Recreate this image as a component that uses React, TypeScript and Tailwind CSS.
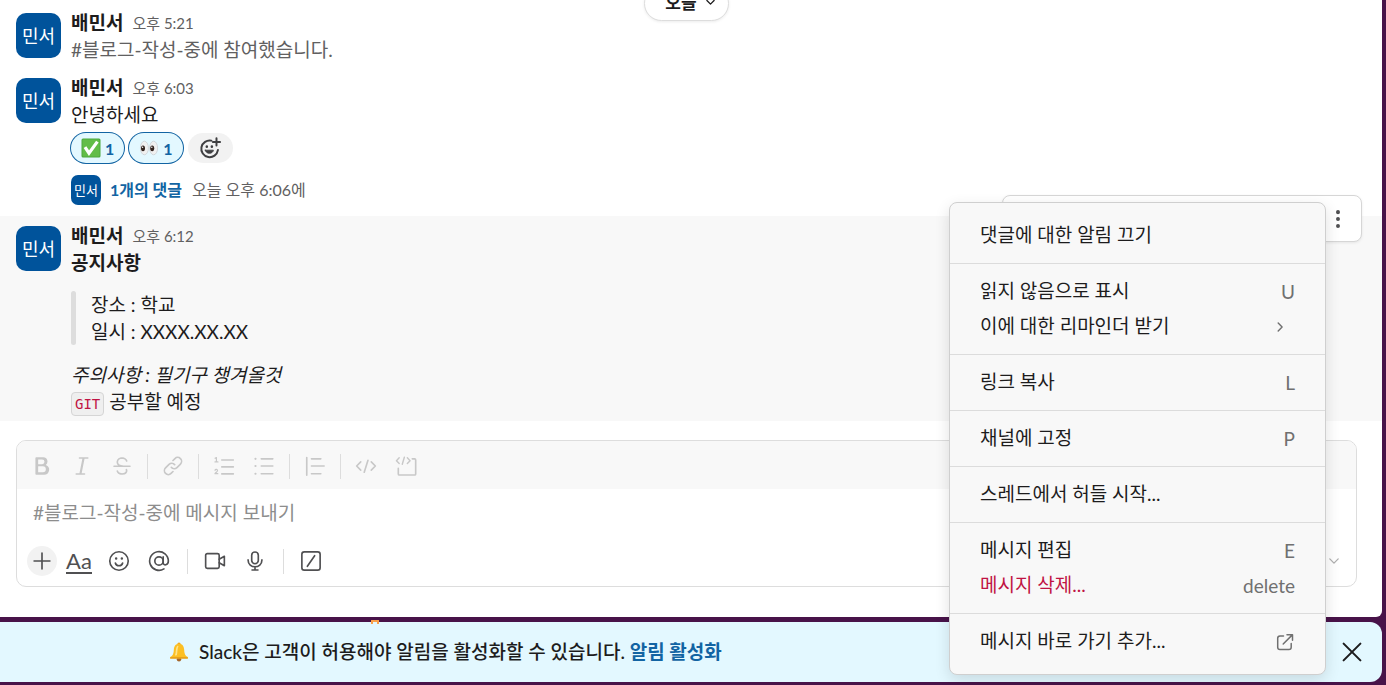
import type { ReactNode } from "react";

function Icon({ children, className = "size-[22px]" }: { children: ReactNode; className?: string }) {
  return (
    <svg
      viewBox="0 0 20 20"
      className={`shrink-0 ${className}`}
      fill="none"
      stroke="currentColor"
      strokeWidth="1.5"
      strokeLinecap="round"
      strokeLinejoin="round"
      aria-hidden="true"
    >
      {children}
    </svg>
  );
}

function Solid({ d }: { d: string }) {
  return <path d={d} fill="currentColor" stroke="none" fillRule="evenodd" />;
}

const boldPath =
  "M4 2.75A.75.75 0 0 1 4.75 2h6.343a3.91 3.91 0 0 1 3.88 3.449A2 2 0 0 1 15 5.84l.001.067a3.9 3.9 0 0 1-1.551 3.118A4.627 4.627 0 0 1 11.875 18H4.75a.75.75 0 0 1-.75-.75V9.5a.8.8 0 0 1 .032-.218A.8.8 0 0 1 4 9.065zm2.5 5.565h3.593a2.157 2.157 0 1 0 0-4.315H6.5zm4.25 1.935H6.5v5.5h4.25a2.75 2.75 0 1 0 0-5.5";
const italicPath =
  "M7 2.75A.75.75 0 0 1 7.75 2h7.5a.75.75 0 0 1 0 1.5H12.3l-2.6 13h2.55a.75.75 0 0 1 0 1.5h-7.5a.75.75 0 0 1 0-1.5H7.7l2.6-13H7.75A.75.75 0 0 1 7 2.75";
const strikePath =
  "M11.721 3.84c-.91-.334-2.028-.36-3.035-.114-1.51.407-2.379 1.861-2.164 3.15C6.718 8.051 7.939 9.5 11.5 9.5l.027.001h5.723a.75.75 0 0 1 0 1.5H2.75a.75.75 0 0 1 0-1.5h3.66c-.76-.649-1.216-1.468-1.368-2.377-.347-2.084 1.033-4.253 3.265-4.848l.007-.002.007-.002c1.252-.307 2.68-.292 3.915.16 1.252.457 2.337 1.381 2.738 2.874a.75.75 0 0 1-1.448.39c-.25-.925-.91-1.528-1.805-1.856m2.968 9.114a.75.75 0 1 0-1.378.59c.273.64.186 1.205-.13 1.674-.333.492-.958.925-1.82 1.137-.989.243-1.991.165-3.029-.124-.93-.26-1.613-.935-1.858-1.845a.75.75 0 0 0-1.448.39c.388 1.441 1.483 2.503 2.903 2.9 1.213.338 2.486.456 3.79.135 1.14-.28 2.12-.889 2.704-1.753.6-.888.743-1.992.266-3.104";
const linkPath =
  "M12.306 3.756a2.75 2.75 0 0 1 3.889 0l.05.05a2.75 2.75 0 0 1 0 3.889l-3.18 3.18a2.75 2.75 0 0 1-3.98-.095l-.03-.034a.75.75 0 0 0-1.11 1.009l.03.034a4.25 4.25 0 0 0 6.15.146l3.18-3.18a4.25 4.25 0 0 0 0-6.01l-.05-.05a4.25 4.25 0 0 0-6.01 0L9.47 4.47a.75.75 0 1 0 1.06 1.06zm-4.611 12.49a2.75 2.75 0 0 1-3.89 0l-.05-.051a2.75 2.75 0 0 1 0-3.89l3.18-3.179a2.75 2.75 0 0 1 3.98.095l.03.034a.75.75 0 1 0 1.11-1.01l-.03-.033a4.25 4.25 0 0 0-6.15-.146l-3.18 3.18a4.25 4.25 0 0 0 0 6.01l.05.05a4.25 4.25 0 0 0 6.01 0l1.775-1.775a.75.75 0 0 0-1.06-1.06z";

function CheckEmoji() {
  return (
    <svg viewBox="0 0 20 20" className="size-5" aria-hidden="true">
      <rect x="0.5" y="0.5" width="19" height="19" rx="1.5" fill="#4fa83e" />
      <rect x="1.5" y="1.5" width="17" height="17" rx="1" fill="#62bd48" />
      <path d="M4 9.2l4 6L16.4 3.6" fill="none" stroke="#fff" strokeWidth="3.2" />
    </svg>
  );
}

function EyesEmoji() {
  return (
    <svg viewBox="0 0 20 20" className="size-5" aria-hidden="true">
      <ellipse cx="5.4" cy="10" rx="4" ry="6.8" fill="#f0f0f0" stroke="#cfd4d8" strokeWidth="0.9" />
      <ellipse cx="14.6" cy="10" rx="4" ry="6.8" fill="#f0f0f0" stroke="#cfd4d8" strokeWidth="0.9" />
      <ellipse cx="4" cy="10.3" rx="2" ry="2.9" fill="#33241f" />
      <ellipse cx="13.2" cy="10.3" rx="2" ry="2.9" fill="#33241f" />
      <circle cx="3.6" cy="9.2" r="0.7" fill="#fff" />
      <circle cx="12.8" cy="9.2" r="0.7" fill="#fff" />
    </svg>
  );
}

function BellEmoji() {
  return (
    <svg viewBox="0 0 20 20" className="size-5 shrink-0" aria-hidden="true">
      <circle cx="10" cy="17.2" r="2.2" fill="#a5662a" />
      <circle cx="10" cy="2.2" r="1.7" fill="#f2a61c" />
      <path d="M10 1.8c-3.6 0-5 2.8-5.2 6.2C4.6 12 3.8 13.6 1.2 15v1.6h17.6V15c-2.6-1.4-3.4-3-3.6-7C15 4.6 13.6 1.8 10 1.8z" fill="#fcbf24" />
      <path d="M8.4 3.8C7 5 6.9 8 6.6 11l-.7 2.5 2-.2c.7-3 .3-6.5 1.6-9.3z" fill="#ffe58a" />
      <path d="M1.2 15.2h17.6v1.4H1.2z" fill="#e29a1b" />
    </svg>
  );
}

function Message({ time, highlighted = false, children }: { time: string; highlighted?: boolean; children: ReactNode }) {
  return (
    <article className={`relative flex gap-2.5 px-4 pt-1.5 ${highlighted ? "bg-[#f8f8f8]" : ""}`}>
      <div className="mt-1 flex size-[45px] shrink-0 items-center justify-center rounded-[10px] bg-[#00539b] text-lg text-white">
        민서
      </div>
      <div className="min-w-0 flex-1">
        <header className="flex h-[27px] items-center gap-[9px]">
          <a href="#profile" className="font-bold">배민서</a>
          <a href="#message" className="pt-0.5 text-[15px] text-[#616061]">{time}</a>
        </header>
        {children}
      </div>
    </article>
  );
}

function Tool({ label, children }: { label: string; children: ReactNode }) {
  return (
    <button type="button" aria-label={label} className="flex size-9 items-center justify-center">
      {children}
    </button>
  );
}

function Divider() {
  return <span className="mx-[3px] h-[25px] w-px bg-[#dddddd]" />;
}

function WideDivider() {
  return (
    <span className="flex h-[25px] w-3 justify-center">
      <span className="w-px bg-[#dddddd]" />
    </span>
  );
}

function Composer() {
  return (
    <form className="mt-[19px] mr-[25px] ml-4 overflow-hidden rounded-[10px] border border-[#dddddd]">
      <div className="flex h-12 items-center gap-1 bg-[#f8f8f8] px-[7px] pt-0.5 text-[#c8c8c8]">
        <Tool label="굵게"><Icon><Solid d={boldPath} /></Icon></Tool>
        <Tool label="기울임꼴"><Icon><Solid d={italicPath} /></Icon></Tool>
        <Tool label="취소선"><Icon><Solid d={strikePath} /></Icon></Tool>
        <Divider />
        <Tool label="링크"><Icon><Solid d={linkPath} /></Icon></Tool>
        <Divider />
        <Tool label="순서가 지정된 목록">
          <Icon>
            <path d="M8 4.5h10.5M8 10.8h10.5M8 17.2h10.5" />
            <path d="M1.9 3l1.2-.7v4M1.8 6.3h2.7M1.8 13.9c.4-1.2 2.5-1 2.3.4-.1.9-1.5 1.5-2.3 2.7h2.6" strokeWidth="1.1" />
          </Icon>
        </Tool>
        <Tool label="글머리 기호 목록">
          <Icon>
            <path d="M7.5 3.500H18M7.5 10H18M7.5 17H18" />
            <path d="M2.2 3.5h.1M2.2 10h.1M2.2 17h.1" strokeWidth="1.9" />
          </Icon>
        </Tool>
        <Divider />
        <Tool label="인용구">
          <Icon><path d="M2.5 2.3v16M6.8 3.5h8.5M6.8 10h11.5M6.8 17h8.5" /></Icon>
        </Tool>
        <Divider />
        <Tool label="코드">
          <Icon><path d="M5.2 6.3L1.5 10l3.7 3.7M14.8 6.3l3.7 3.7-3.7 3.7M11.8 4.8L8.4 15.6" /></Icon>
        </Tool>
        <Tool label="코드 블록">
          <Icon>
            <path d="M3.8 2.6L1.3 5.2l2.5 2.6M11.2 2.6l2.5 2.6-2.5 2.6M8.5 2L6.6 8.4" strokeWidth="1.3" />
            <path d="M15.7 3.5h2.1q1 0 1 1v12.7q0 1-1 1H4q-1 0-1-1v-5" />
          </Icon>
        </Tool>
      </div>
      <input
        type="text"
        aria-label="메시지 작성"
        placeholder="#블로그-작성-중에 메시지 보내기"
        className="mb-2 block h-[46px] w-full bg-white px-4 outline-none placeholder:text-[#8d8d8d]"
      />
      <div className="flex items-center gap-1 pr-3 pb-[7px] pl-2.5 text-[#505052]">
        <button type="button" aria-label="첨부" className="flex size-[30px] items-center justify-center rounded-full bg-[#f2f2f2]">
          <Icon><path d="M10 2.8v14.4M2.8 10h14.4" /></Icon>
        </button>
        <button type="button" aria-label="서식 표시" className="flex h-9 w-9 items-center justify-center pt-0.5">
          <span className="border-b-2 text-[22px] leading-[22px]">Aa</span>
        </button>
        <Tool label="이모티콘">
          <Icon>
            <circle cx="10" cy="10" r="8.4" />
            <path d="M6.7 11.8c.7 3.4 5.9 3.4 6.6 0" />
            <path d="M7.4 7.7v.1M12.6 7.7v.1" strokeWidth="2.3" />
          </Icon>
        </Tool>
        <Tool label="멘션">
          <Icon>
            <circle cx="10" cy="10" r="3.8" />
            <path d="M13.8 6.3v5.2c0 3 4.7 2.6 4.7-1.5a8.5 8.5 0 1 0-4 7.2" />
          </Icon>
        </Tool>
        <WideDivider />
        <Tool label="동영상 클립 녹화">
          <Icon>
            <rect x="1.5" y="3.3" width="12.3" height="13.4" rx="1.5" />
            <path d="M13.8 8.4l4.7-2.7v8.6l-4.7-2.7" />
          </Icon>
        </Tool>
        <Tool label="오디오 클립 녹음">
          <Icon>
            <rect x="7" y="1.8" width="6" height="10.7" rx="3" />
            <path d="M3.7 9c0 8.3 12.6 8.3 12.6 0M10 15.3V18.2M7.3 18.2h5.4" />
          </Icon>
        </Tool>
        <WideDivider />
        <Tool label="바로 가기 실행">
          <Icon>
            <rect x="1.7" y="1.7" width="16.6" height="16.6" rx="2.2" />
            <path d="M13.3 5.2L6.7 14.8" />
          </Icon>
        </Tool>
        <button type="button" aria-label="예약 옵션" className="ml-auto flex size-5 items-center justify-center text-[#b0b0b0]">
          <Icon className="size-3"><path d="M3 6.5l7 7 7-7" strokeWidth="2.2" /></Icon>
        </button>
      </div>
    </form>
  );
}

type Item = { label: string; hint?: ReactNode; danger?: boolean };

const menuGroups: Item[][] = [
  [{ label: "댓글에 대한 알림 끄기" }],
  [
    { label: "읽지 않음으로 표시", hint: "U" },
    {
      label: "이에 대한 리마인더 받기",
      hint: <Icon className="mr-[9px] size-3"><path d="M7 3.5l6.5 6.5L7 16.5" strokeWidth="2.4" /></Icon>,
    },
  ],
  [{ label: "링크 복사", hint: "L" }],
  [{ label: "채널에 고정", hint: "P" }],
  [{ label: "스레드에서 허들 시작..." }],
  [
    { label: "메시지 편집", hint: "E" },
    { label: "메시지 삭제...", hint: "delete", danger: true },
  ],
  [
    {
      label: "메시지 바로 가기 추가...",
      hint: (
        <Icon className="size-5">
          <path d="M8.5 4H5Q2.7 4 2.7 6.3v8.9q0 2.3 2.3 2.3h8.9q2.3 0 2.3-2.3v-3.7M12 2.7h5.5v5.5M17.3 2.9L8.2 12" />
        </Icon>
      ),
    },
  ],
];

function ContextMenu() {
  return (
    <div
      role="menu"
      className="absolute top-[202px] right-14 z-20 w-[377px] rounded-lg border border-[#cfcfcf] bg-[#f8f8f8] py-[5px] shadow-[0_5px_15px_rgba(0,0,0,0.12)]"
    >
      {menuGroups.map((group, index) => (
        <div key={index} className={`pt-[9px] pb-[11px] ${index > 0 ? "border-t border-[#dcdcdc]" : ""}`}>
          {group.map((item) => (
            <button
              key={item.label}
              type="button"
              role="menuitem"
              className={`flex h-[35px] w-full items-center justify-between px-[30px] text-left ${item.danger ? "text-[#c01343]" : ""}`}
            >
              <span>{item.label}</span>
              <span className="pt-0.5 text-[#707070]">{item.hint}</span>
            </button>
          ))}
        </div>
      ))}
    </div>
  );
}

export default function App() {
  return (
    <div className="relative min-h-screen overflow-hidden bg-[#481349] pr-1 font-['Lato','Noto_Sans_CJK_KR',sans-serif] text-[19px] leading-[27px] text-[#1d1c1d]">
      <div className="relative">
        <main className="rounded-br-md bg-white pt-[3px] pb-[30px]">
          <div className="absolute -top-3.5 right-[9px] left-0 z-10 flex justify-center">
            <button
              type="button"
              className="flex h-[35px] items-center gap-2 rounded-full border border-[#dddddd] bg-white pr-3 pb-0.5 pl-5 text-[17px] font-bold shadow-[0_1px_3px_rgba(0,0,0,0.08)]"
            >
              오늘
              <Icon className="size-[11px]"><path d="M3.5 6.5L10 13l6.5-6.5" strokeWidth="2.4" /></Icon>
            </button>
          </div>

          <Message time="오후 5:21">
            <p className="pb-[5px] text-[#616061]">#블로그-작성-중에 참여했습니다.</p>
          </Message>

          <Message time="오후 6:03">
            <p>안녕하세요</p>
            <div className="mt-[5px] flex gap-[5px] text-[16px] text-[#1264a3]">
              <button type="button" className="flex h-[30px] items-center gap-1 rounded-full bg-[#e3f8ff] px-2.5 ring-1 ring-[#1264a3]">
                <CheckEmoji />
                <span className="font-bold">1</span>
              </button>
              <button type="button" className="flex h-[30px] items-center gap-1 rounded-full bg-[#e3f8ff] px-2.5 ring-1 ring-[#1264a3]">
                <EyesEmoji />
                <span className="font-bold">1</span>
              </button>
              <button type="button" aria-label="반응 추가" className="flex h-[30px] w-[45px] items-center justify-center rounded-full bg-[#f2f2f2] text-[#3f3f41]">
                <Icon>
                  <path d="M11.3 3.3a7.6 7.6 0 1 0 5.9 8.6" strokeWidth="1.8" />
                  <path d="M5.7 12h7.4c-.5 3.8-6.9 3.8-7.4 0z" fill="currentColor" strokeWidth="0.8" />
                  <path d="M7.1 8.7v.1M11.7 8.7v.1" strokeWidth="2.3" />
                  <path d="M15.9 1.2v6.6M12.6 4.5h6.6" strokeWidth="1.8" />
                </Icon>
              </button>
            </div>
            <div className="mt-3 mb-[11px] flex items-center text-[16px]">
              <span className="flex size-[30px] items-center justify-center rounded-[7px] bg-[#00539b] text-[13px] text-white">민서</span>
              <a href="#thread" className="ml-[9px] pb-0.5 font-bold text-[#1264a3]">1개의 댓글</a>
              <span className="ml-2.5 pb-0.5 text-[#616061]">오늘 오후 6:06에</span>
            </div>
          </Message>

          <Message time="오후 6:12" highlighted>
            <p className="font-bold">공지사항</p>
            <blockquote className="mt-[15px] mb-4 flex gap-[15px]">
              <span className="w-[5px] rounded-full bg-[#dddddd]" />
              <span className="block">
                장소 : 학교
                <br />
                일시 : XXXX.XX.XX
              </span>
            </blockquote>
            <p className="italic">주의사항 : 필기구 챙겨올것</p>
            <p className="flex h-[33px] items-start gap-[5px]">
              <code className="mt-1 rounded-[4px] border border-[#d5d5d5] bg-[#efefef] px-[3px] pt-px font-['DejaVu_Sans_Mono',monospace] text-[14px] leading-[21px] text-[#c01343]">
                GIT
              </code>
              공부할 예정
            </p>
            <div className="absolute -top-[21px] right-5 flex h-[47px] w-[360px] items-center justify-end rounded-lg border border-[#d6d6d6] bg-white shadow-[0_1px_3px_rgba(0,0,0,0.08)]">
              <button type="button" aria-label="추가 작업" className="mr-[11px] flex size-6 items-center justify-center text-[#505052]">
                <Icon><path d="M10 3.7v.1M10 10v.1M10 16.3v.1" strokeWidth="3.6" /></Icon>
              </button>
            </div>
          </Message>

          <Composer />
        </main>
        <ContextMenu />
      </div>

      <footer className="relative mt-[5px] mb-[3px] flex h-[60px] items-center rounded-r-xl bg-[#e3f8ff] pr-[18px] pl-[169px]">
        <span className="absolute -top-0.5 left-[371px] h-1 w-2 border-x-2 border-t-2 border-[#f9a04b]" />
        <BellEmoji />
        <p className="ml-2.5 pb-0.5 font-medium">
          Slack은 고객이 허용해야 알림을 활성화할 수 있습니다.{" "}
          <a href="#enable" className="font-bold text-[#1264a3]">알림 활성화</a>
        </p>
        <button type="button" aria-label="닫기" className="ml-auto">
          <Icon className="size-6"><path d="M3 3l14 14M17 3L3 17" strokeWidth="1.7" /></Icon>
        </button>
      </footer>
    </div>
  );
}
